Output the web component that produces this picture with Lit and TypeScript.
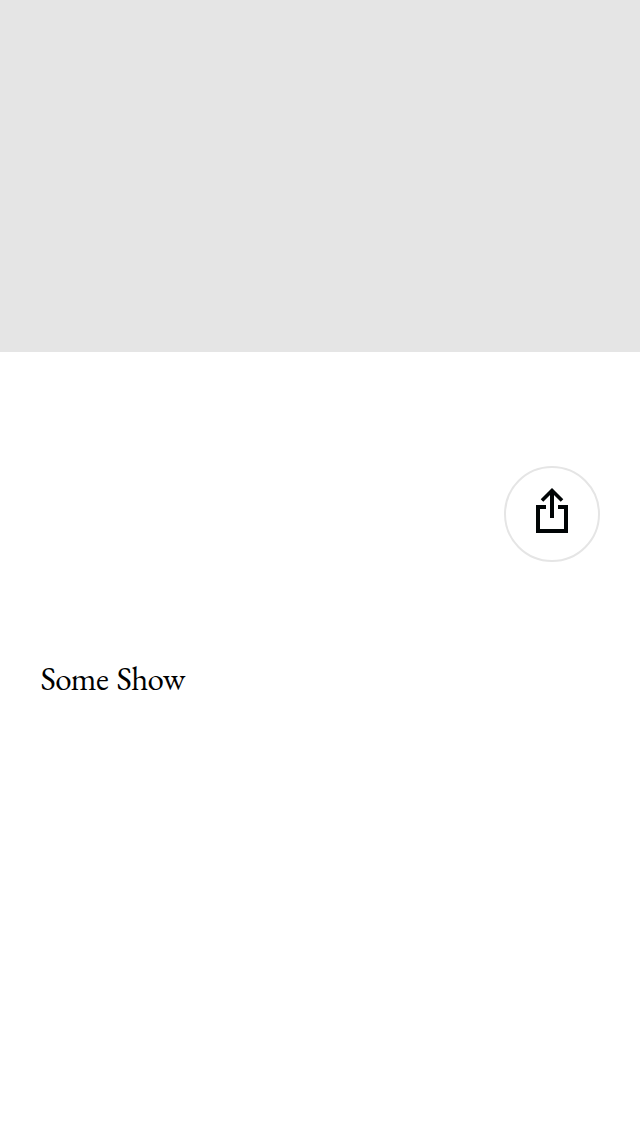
import { LitElement, html, css } from "lit";
import { customElement } from "lit/decorators.js";

@customElement("share-button")
class ShareButton extends LitElement {
  static styles = css`
    :host { display: block; }
    .button {
      box-sizing: border-box;
      display: flex;
      width: 96px;
      height: 96px;
      padding: 0;
      border: 2px solid #e5e5e5;
      border-radius: 50%;
      background: #fff;
      align-items: center;
      justify-content: center;
    }
    .icon { display: block; flex: none; }
  `;
  render() {
    return html`<button class="button" aria-label="Share">
      <svg class="icon" width="92" height="92" viewBox="506 468 92 92" fill="none" stroke="#000405" stroke-width="4">
        <path d="M546 507H538V531H566V507H558" />
        <path d="M552 518V491" />
        <path d="M542 500.5L552 490.5L562 500.5" stroke-width="3.6" />
      </svg>
    </button>`;
  }
}

@customElement("app-root")
class AppRoot extends LitElement {
  static styles = css`
    :host {
      display: flex;
      flex-direction: column;
      height: 1136px;
      background: #fff;
      overflow: hidden;
    }
    .hero { height: 352px; flex: none; background: #e5e5e5; }
    .actions { display: flex; justify-content: flex-end; padding: 114px 40px 0; }
    .title {
      margin: 97px 40px 0 40.4px;
      font: 400 33px/40px "EB Garamond", "Liberation Serif", serif;
      letter-spacing: -0.6px;
      word-spacing: 2.2px;
      color: #000;
      white-space: nowrap;
    }
  `;
  render() {
    return html`
      <div class="hero"></div>
      <div class="actions"><share-button></share-button></div>
      <h1 class="title">Some Show</h1>
    `;
  }
}
